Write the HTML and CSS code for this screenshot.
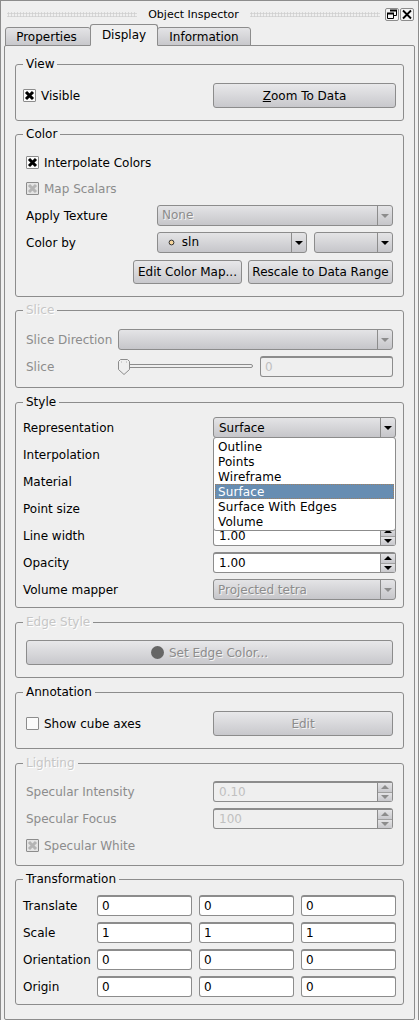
FILE: index.html
```html
<!DOCTYPE html>
<html lang="en">
<head>
  <meta charset="UTF-8">
  <title>Object Inspector</title>
  <link rel="stylesheet" href="styles.css">
</head>
<body>
  <div class="window">
    <div class="titlebar">
      <span class="grip"></span>
      <span class="title">Object Inspector</span>
      <span class="grip"></span>
      <span class="winbtn">
        <svg width="12" height="11" viewBox="0 0 12 11"><path d="M4.500 1.500h6v5H8M1.500 4.500h6v5h-6z" fill="none" stroke="#000"/><path d="M4 1.500h7M1 4.500h7" fill="none" stroke="#000" stroke-width="2"/></svg>
      </span>
      <span class="winbtn">
        <svg width="12" height="11" viewBox="0 0 12 11"><path d="M2 1.500l8 8M10 1.500l-8 8" fill="none" stroke="#000" stroke-width="1.800"/></svg>
      </span>
    </div>

    <div class="tabs">
      <div class="tab tab-properties">Properties</div>
      <div class="tab tab-display active">Display</div>
      <div class="tab tab-information">Information</div>
    </div>

    <div class="pane">
      <fieldset class="group group-view">
        <legend>View</legend>
        <div class="row row-btn">
          <label class="check">
            <span class="box">
              <svg width="11" height="11" viewBox="0 0 11 11"><path d="M2 2l7 7M9 2l-7 7" fill="none" stroke="#000" stroke-width="3"/></svg>
            </span>
            Visible
          </label>
          <button class="btn btn-side"><u>Z</u>oom To Data</button>
        </div>
      </fieldset>

      <fieldset class="group inset group-color">
        <legend>Color</legend>
        <div class="row">
          <label class="check">
            <span class="box">
              <svg width="11" height="11" viewBox="0 0 11 11"><path d="M2 2l7 7M9 2l-7 7" fill="none" stroke="#000" stroke-width="3"/></svg>
            </span>
            Interpolate Colors
          </label>
        </div>
        <div class="row off">
          <label class="check">
            <span class="box">
              <svg width="11" height="11" viewBox="0 0 11 11"><path d="M2 2l7 7M9 2l-7 7" fill="none" stroke="#b4b4b4" stroke-width="3"/></svg>
            </span>
            Map Scalars
          </label>
        </div>
        <div class="row">
          <span class="label label-color">Apply Texture</span>
          <div class="combo grow off"><span class="combo-text">None</span><span class="combo-arrow"><i></i></span></div>
        </div>
        <div class="row">
          <span class="label label-color">Color by</span>
          <div class="combo combo-array">
            <span class="combo-text">
              <svg class="dot" width="7" height="7" viewBox="0 0 7 7"><circle cx="3.500" cy="3.500" r="2.400" fill="#f6d49a" stroke="#333"/></svg>
              sln
            </span>
            <span class="combo-arrow"><i></i></span>
          </div>
          <div class="combo combo-comp"><span class="combo-text"></span><span class="combo-arrow"><i></i></span></div>
        </div>
        <div class="row row-actions">
          <button class="btn btn-map">Edit Color Map...</button>
          <button class="btn btn-rescale">Rescale to Data Range</button>
        </div>
      </fieldset>

      <fieldset class="group inset group-slice off-group">
        <legend>Slice</legend>
        <div class="row off">
          <span class="label label-slice">Slice Direction</span>
          <div class="combo grow"><span class="combo-text"></span><span class="combo-arrow"><i></i></span></div>
        </div>
        <div class="row off">
          <span class="label label-slice">Slice</span>
          <div class="slider">
            <div class="track"></div>
            <svg class="handle" width="12" height="16" viewBox="0 0 12 16"><path d="M2.500.5h7l2 2v8l-5.500 5-5.500-5v-8z" fill="#efefef" stroke="#8c8c8c"/><path d="M3.500 2.500v1M8.500 2.500v1" stroke="#b0b0b0"/></svg>
          </div>
          <div class="field field-slice">0</div>
        </div>
      </fieldset>

      <fieldset class="group group-style">
        <legend>Style</legend>
        <div class="row">
          <span class="label label-style">Representation</span>
          <div class="combo control combo-open"><span class="combo-text">Surface</span><span class="combo-arrow"><i></i></span></div>
          <ul class="popup">
            <li>Outline</li>
            <li>Points</li>
            <li>Wireframe</li>
            <li class="current">Surface</li>
            <li>Surface With Edges</li>
            <li>Volume</li>
          </ul>
        </div>
        <div class="row"><span class="label label-style">Interpolation</span></div>
        <div class="row"><span class="label label-style">Material</span></div>
        <div class="row"><span class="label label-style">Point size</span></div>
        <div class="row">
          <span class="label label-style">Line width</span>
          <div class="spin control"><span class="spin-text">1.00</span><span class="spin-btns"><b><i class="up"></i></b><b><i></i></b></span></div>
        </div>
        <div class="row">
          <span class="label label-style">Opacity</span>
          <div class="spin control"><span class="spin-text">1.00</span><span class="spin-btns"><b><i class="up"></i></b><b><i></i></b></span></div>
        </div>
        <div class="row">
          <span class="label label-style">Volume mapper</span>
          <div class="combo control off"><span class="combo-text">Projected tetra</span><span class="combo-arrow"><i></i></span></div>
        </div>
      </fieldset>

      <fieldset class="group inset group-edge off-group">
        <legend>Edge Style</legend>
        <div class="row row-btn off">
          <button class="btn grow"><span class="swatch"></span>Set Edge Color...</button>
        </div>
      </fieldset>

      <fieldset class="group inset group-annotation">
        <legend>Annotation</legend>
        <div class="row row-btn">
          <label class="check"><span class="box"></span>Show cube axes</label>
          <div class="off"><button class="btn btn-edit">Edit</button></div>
        </div>
      </fieldset>

      <fieldset class="group inset group-lighting off-group">
        <legend>Lighting</legend>
        <div class="row off">
          <span class="label label-color">Specular Intensity</span>
          <div class="spin control-light"><span class="spin-text">0.10</span><span class="spin-btns"><b><i class="up"></i></b><b><i></i></b></span></div>
        </div>
        <div class="row off">
          <span class="label label-color">Specular Focus</span>
          <div class="spin control-light"><span class="spin-text">100</span><span class="spin-btns"><b><i class="up"></i></b><b><i></i></b></span></div>
        </div>
        <div class="row off">
          <label class="check">
            <span class="box">
              <svg width="11" height="11" viewBox="0 0 11 11"><path d="M2 2l7 7M9 2l-7 7" fill="none" stroke="#b4b4b4" stroke-width="3"/></svg>
            </span>
            Specular White
          </label>
        </div>
      </fieldset>

      <fieldset class="group group-transform">
        <legend>Transformation</legend>
        <div class="row row-xyz"><span class="label">Translate</span><div class="field">0</div><div class="field">0</div><div class="field">0</div></div>
        <div class="row row-xyz"><span class="label">Scale</span><div class="field">1</div><div class="field">1</div><div class="field">1</div></div>
        <div class="row row-xyz"><span class="label">Orientation</span><div class="field">0</div><div class="field">0</div><div class="field">0</div></div>
        <div class="row row-xyz"><span class="label">Origin</span><div class="field">0</div><div class="field">0</div><div class="field">0</div></div>
      </fieldset>
    </div>
  </div>
</body>
</html>
```

FILE: styles.css
```css
* {
  box-sizing: border-box;
}

html, body {
  margin: 0;
  height: 100%;
}

body {
  font-family: "DejaVu Sans", sans-serif;
  font-size: 12px;
  color: #000;
  background: #efefef;
}

.window {
  height: 1020px;
  padding: 0 3px;
  border: 1px solid #8c8c8c;
  border-bottom: 0;
  background: #efefef;
  overflow: hidden;
}

/* title bar */
.titlebar {
  display: flex;
  align-items: center;
  height: 23px;
  padding: 3px 1px 0 3px;
}

.title {
  margin: 0 11px;
  white-space: nowrap;
  font-size: 11px;
}

.grip {
  flex: 1;
  height: 5px;
  background-image: radial-gradient(#cfcfcf 45%, transparent 55%);
  background-size: 3px 3px;
}

.winbtn {
  display: flex;
  width: 14px;
  height: 13px;
  margin-left: 1px;
  border: 1px solid #8c8c8c;
  border-radius: 2px;
  background: #f4f4f4;
  align-items: center;
  justify-content: center;
}

.grip + .winbtn {
  margin-left: 5px;
}

/* tabs */
.tabs {
  display: flex;
  align-items: flex-end;
  height: 22px;
  padding-left: 1px;
  position: relative;
  z-index: 1;
  margin-bottom: -1px;
}

.tab {
  height: 19px;
  text-align: center;
  line-height: 18px;
  border: 1px solid #8c8c8c;
  border-radius: 3px 3px 0 0;
  background: linear-gradient(#e4e4e6, #c8c8cc);
}

.tab-properties { width: 86px; padding-right: 3px; }
.tab-display { width: 68px; margin-left: -1px; }
.tab-information { width: 94px; margin-left: -1px; }

.tab.active {
  height: 22px;
  line-height: 20px;
  background: #efefef;
  border-bottom-color: #efefef;
  position: relative;
}

/* main pane */
.pane {
  display: flex;
  flex-direction: column;
  gap: 7px;
  height: 975px;
  padding: 11px 10px 0 10px;
  border: 1px solid #8c8c8c;
  border-radius: 2px;
}

.group {
  margin: 0;
  min-width: 0;
  padding: 0 7px;
  border: 1px solid #8c8c8c;
  border-radius: 3px;
}

.group legend {
  padding: 0 3px;
  line-height: 14px;
}

.inset .row {
  margin-left: 3px;
  margin-right: 3px;
}

.off-group legend {
  color: #c6c6c6;
  text-shadow: 1px 1px 0 #fff;
}

.group-view { padding-top: 12px; padding-bottom: 12px; }
.group-color { margin-top: -1px; padding-top: 11px; padding-bottom: 12px; }
.group-slice { margin-top: -1px; padding-top: 12px; padding-bottom: 10px; }
.group-style { padding-top: 8px; padding-bottom: 7px; }
.group-edge { padding-top: 11px; padding-bottom: 12px; }
.group-annotation { padding-top: 12px; padding-bottom: 12px; }
.group-lighting { padding-top: 11px; padding-bottom: 9px; }
.group-transform { margin-top: -1px; padding-top: 9px; padding-bottom: 7px; }

.row {
  display: flex;
  align-items: center;
  height: 21px;
  margin-bottom: 6px;
  position: relative;
}

.row:last-child {
  margin-bottom: 0;
}

.group-color .row:first-of-type {
  margin-bottom: 5px;
}

.row-btn {
  height: 25px;
  justify-content: space-between;
}

.row-actions {
  height: 24px;
  margin-top: 7px;
  justify-content: flex-end;
  gap: 6px;
}

.off {
  color: #8c8c8c;
}

.label {
  flex: none;
}

.label-color { width: 131px; }
.label-slice { width: 92px; }
.label-style { width: 190px; }

.grow {
  flex: 1;
}

/* checkbox */
.check {
  display: flex;
  align-items: center;
  gap: 5px;
}

.box {
  display: flex;
  align-items: center;
  justify-content: center;
  width: 13px;
  height: 13px;
  border: 1px solid #8c8c8c;
  border-radius: 1px;
  background: #fbfbfb;
}

.off .box {
  background: #e4e4e4;
}

/* buttons */
.btn {
  height: 25px;
  padding: 0;
  font: inherit;
  color: inherit;
  border: 1px solid #8c8c8c;
  border-radius: 3px;
  background: linear-gradient(#e8e8ea, #c8c8cc);
}

.off .btn {
  text-shadow: 1px 1px 0 #f4f4f4;
}

.btn-side { width: 183px; }
.btn-edit { width: 180px; display: block; }
.btn-map { width: 109px; height: 24px; }
.btn-rescale { width: 145px; height: 24px; }

.swatch {
  display: inline-block;
  width: 13px;
  height: 13px;
  margin-right: 5px;
  vertical-align: -2px;
  border-radius: 50%;
  background: #666;
}

/* combos */
.combo {
  display: flex;
  height: 21px;
  border: 1px solid #8c8c8c;
  border-radius: 3px;
  background: linear-gradient(#e4e4e6, #c6c6ca);
}

.control {
  flex: none;
  width: 183px;
}

.control-light {
  width: 180px;
  margin-left: 56px;
}

.combo-array { width: 150px; }
.combo-comp { width: 79px; margin-left: 7px; }

.combo-text {
  flex: 1;
  padding-left: 4px;
  line-height: 19px;
}

.group-style .combo-text {
  line-height: 21px;
}

.combo-open .combo-text {
  padding-left: 5px;
}

.off .combo-text {
  text-shadow: 1px 1px 0 #f4f4f4;
}

.combo-array .combo-text {
  padding-left: 10px;
}

.dot {
  margin-right: 3px;
}

.combo-arrow {
  display: flex;
  align-items: center;
  justify-content: center;
  width: 15px;
  border-left: 1px solid #8c8c8c;
}

.combo-arrow i,
.spin-btns i {
  border-left: 4px solid transparent;
  border-right: 4px solid transparent;
  border-top: 4px solid #000;
}

.off .combo-arrow i,
.off .spin-btns i {
  border-top-color: #8c8c8c;
}

.spin-btns i.up {
  border-top: 0;
  border-bottom: 4px solid #000;
}

.off .spin-btns i.up {
  border-bottom-color: #8c8c8c;
}

/* spin boxes and line edits */
.spin {
  display: flex;
  height: 21px;
  border: 1px solid #8c8c8c;
  border-top-width: 2px;
  border-radius: 3px;
  background: #fff;
}

.off .spin {
  background: #efefef;
  color: #c0c0c0;
}

.spin-text {
  flex: 1;
  padding-left: 5px;
  line-height: 18px;
}

.spin-btns {
  display: flex;
  flex-direction: column;
  width: 15px;
  border-left: 1px solid #8c8c8c;
}

.spin-btns b {
  flex: 1;
  display: flex;
  align-items: center;
  justify-content: center;
  background: linear-gradient(#e4e4e6, #c8c8cc);
}

.spin-btns b + b {
  border-top: 1px solid #a0a0a0;
}

.field {
  height: 21px;
  padding-left: 4px;
  line-height: 18px;
  border: 1px solid #8c8c8c;
  border-top-width: 2px;
  border-radius: 3px;
  background: #fff;
}

.field-slice {
  width: 133px;
  margin-left: 7px;
  background: #efefef;
  color: #c0c0c0;
}

/* slider */
.slider {
  position: relative;
  flex: 1;
  height: 16px;
}

.track {
  position: absolute;
  left: 0;
  right: 0;
  top: 5px;
  height: 4px;
  border: 1px solid #8c8c8c;
  border-radius: 2px;
  background: #efefef;
}

.handle {
  position: absolute;
  left: 0;
  top: 0;
}

/* dropdown list over the Style rows */
.popup {
  position: absolute;
  z-index: 2;
  left: 190px;
  top: 20px;
  width: 183px;
  margin: 0;
  padding: 1px;
  list-style: none;
  border: 1px solid #8c8c8c;
  border-radius: 3px;
  background: #fff;
}

.popup li {
  height: 15px;
  padding-left: 3px;
  line-height: 17px;
  letter-spacing: 0.1px;
}

.popup li.current {
  color: #fff;
  background: #678db2;
  outline: 1px dotted #a08060;
  outline-offset: -1px;
}

/* transformation grid */
.row-xyz {
  display: grid;
  grid-template-columns: 67px 1fr 1fr 1fr;
  column-gap: 7px;
}
```
